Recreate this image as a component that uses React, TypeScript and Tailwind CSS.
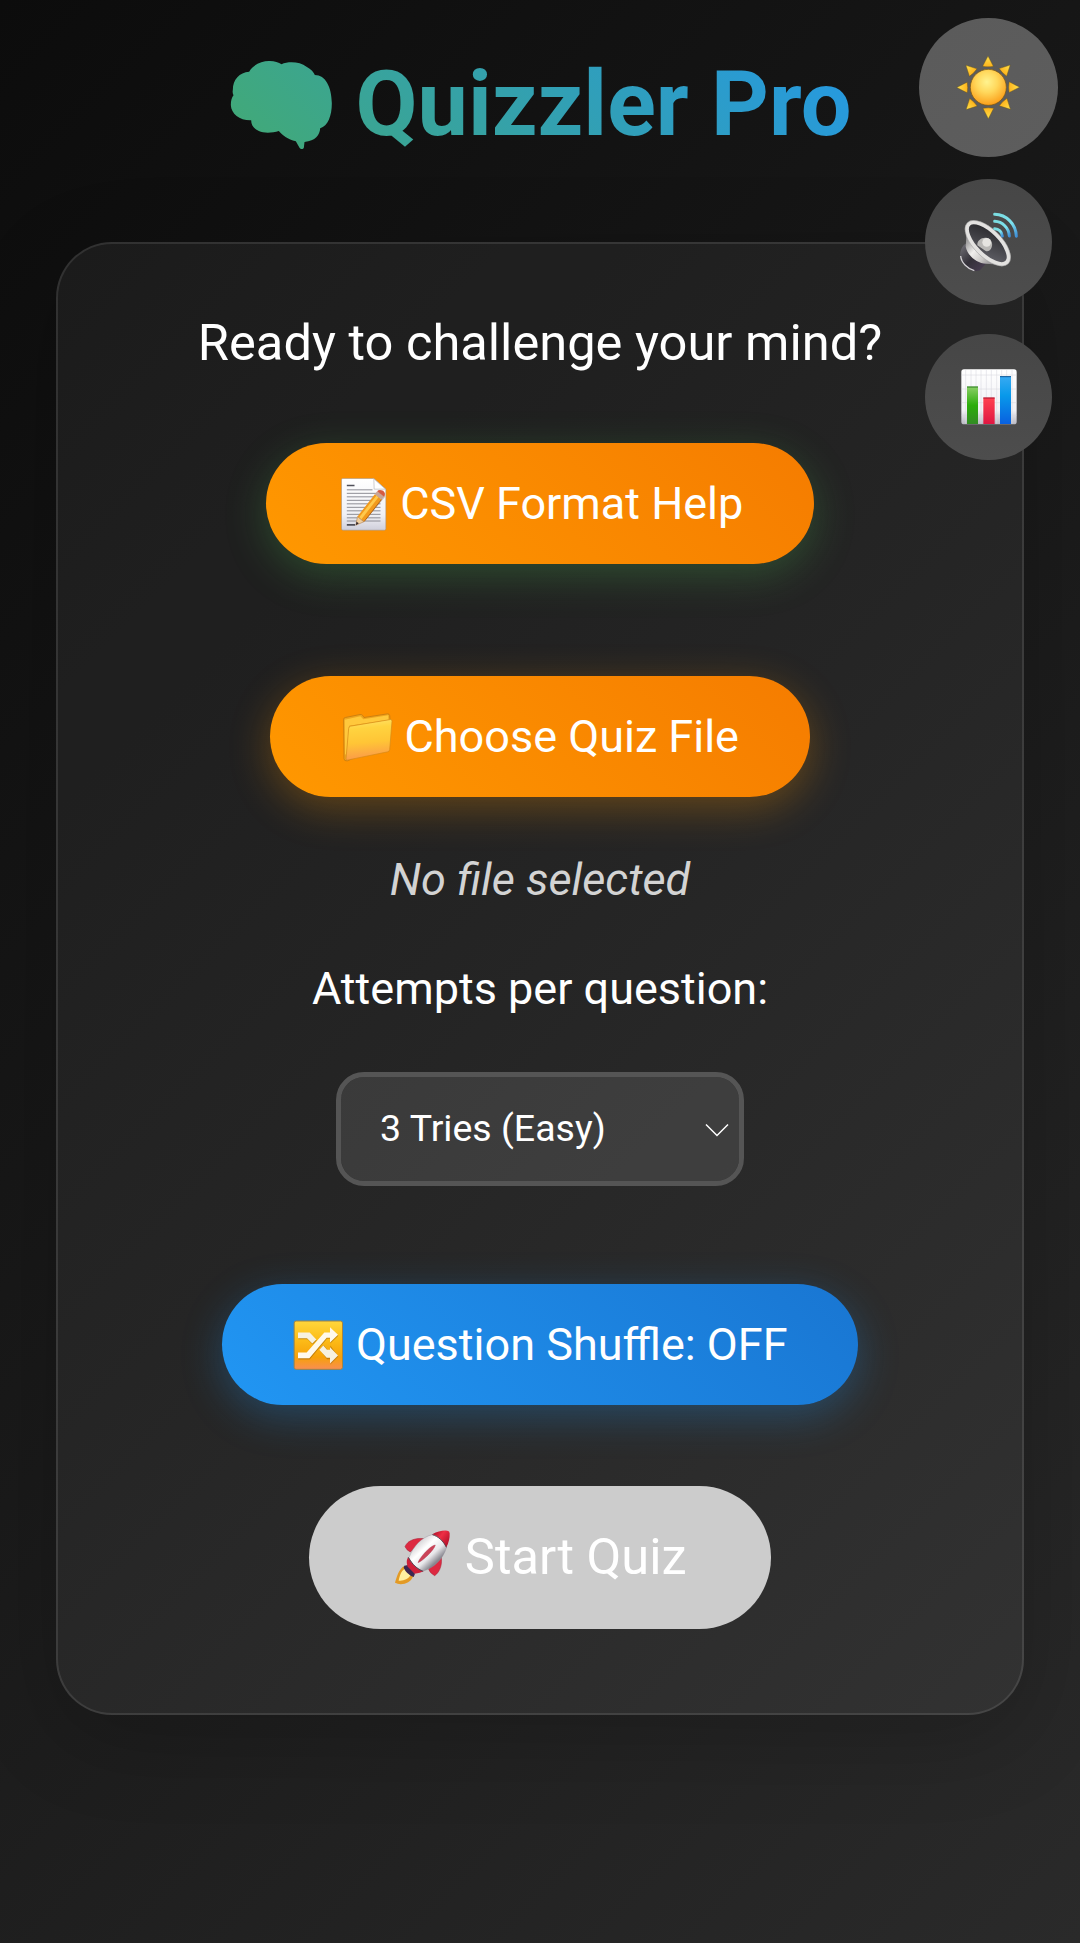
import type { ReactNode } from 'react';

function BrainIcon() {
  return (
    <svg className="mb-[2px] mr-[23px] h-[144px] w-[104px] shrink-0" viewBox="82.5 -24 312 432" overflow="visible">
      <defs>
        <linearGradient id="brain" gradientUnits="userSpaceOnUse" x1="-498" y1="474" x2="1136" y2="-1160">
          <stop offset="0" stopColor="#4caf50" />
          <stop offset="1" stopColor="#2196f3" />
        </linearGradient>
      </defs>
      <path
        fill="url(#brain)"
        d="M97 150C97 118 117 97 146 95C160 71 188 62 208 63C222 63 235 67 243 73C265 63 299 66 318 80C332 88 340 96 343 105C375 105 393 140 394 190C394 228 382 258 359 265C358 285 345 303 312 306L310 323C308 329 300 328 297 323L286 304C262 298 245 285 235 273C215 279 190 280 175 273C160 267 152 255 152 241C118 242 92 222 91 195C91 182 94 172 99 166C96 160 96 155 97 150Z"
      />
    </svg>
  );
}

const rays = [0, 45, 90, 135, 180, 225, 270, 315];

function SunIcon() {
  return (
    <svg className="h-full w-full" viewBox="57 54 417 417">
      <defs>
        <radialGradient id="sun" cx="0.46" cy="0.35" r="0.65">
          <stop offset="0" stopColor="#fff38f" />
          <stop offset="0.45" stopColor="#ffd85c" />
          <stop offset="1" stopColor="#fb9f1a" />
        </radialGradient>
        <linearGradient id="ray" x1="0" y1="0" x2="0" y2="1">
          <stop offset="0" stopColor="#ffe34e" />
          <stop offset="1" stopColor="#fdb21b" />
        </linearGradient>
      </defs>
      {rays.map((a) => (
        <path key={a} d="M264 168L280 199Q264 202 248 199Z" fill="url(#ray)" stroke="#6d5512" strokeOpacity="0.6" strokeWidth="2" transform={`rotate(${a} 264.5 262)`} />
      ))}
      <circle cx="265" cy="262" r="54" fill="url(#sun)" stroke="#7b5712" strokeOpacity="0.7" strokeWidth="3" />
    </svg>
  );
}

function SpeakerIcon() {
  return (
    <svg className="h-full w-full" viewBox="75 27 381 378">
      <defs>
        <linearGradient id="spkBase" x1="0" y1="0" x2="1" y2="1">
          <stop offset="0" stopColor="#77767c" />
          <stop offset="0.5" stopColor="#343139" />
          <stop offset="1" stopColor="#4d4057" />
        </linearGradient>
        <linearGradient id="spkNeck" gradientUnits="userSpaceOnUse" x1="200" y1="215" x2="275" y2="282">
          <stop offset="0" stopColor="#9d9c9c" />
          <stop offset="0.35" stopColor="#f0efed" />
          <stop offset="0.7" stopColor="#c9c7c5" />
          <stop offset="1" stopColor="#8d8a8e" />
        </linearGradient>
        <linearGradient id="spkCone" x1="0" y1="0" x2="1" y2="1">
          <stop offset="0" stopColor="#202023" />
          <stop offset="1" stopColor="#68686f" />
        </linearGradient>
        <linearGradient id="spkWave" x1="0" y1="0" x2="1" y2="1">
          <stop offset="0" stopColor="#7adce0" />
          <stop offset="0.6" stopColor="#7de0ec" />
          <stop offset="1" stopColor="#3f8fd6" />
        </linearGradient>
      </defs>
      <path d="M192 224C178 240 177 262 187 279C200 298 222 307 240 301L262 276L205 218Z" fill="url(#spkBase)" />
      <path d="M182 258C184 279 203 297 223 302" fill="none" stroke="#d5d3d6" strokeWidth="4" />
      <path d="M200 185L197 230C203 258 232 281 258 281L300 284Z" fill="url(#spkNeck)" />
      <g transform="rotate(45 262 221)">
        <ellipse cx="262" cy="219" rx="81" ry="36" fill="url(#spkCone)" stroke="#e3e2e0" strokeWidth="12" />
        <ellipse cx="262" cy="219" rx="87" ry="42" fill="none" stroke="#999" strokeWidth="1.500" />
      </g>
      <path d="M232 226C231 211 246 200 262 204C273 207 280 219 275 232C272 242 264 245 257 243Z" fill="#b9b8b6" />
      <circle cx="260" cy="217" r="13" fill="#e5e4e1" />
      <g fill="none" stroke="url(#spkWave)" strokeWidth="9" strokeLinecap="round">
        <path d="M284 133C320 134 348 162 349 199" />
        <path d="M284 154C307 155 327 174 328 198" />
        <path d="M284 176C296 177 306 186 307 198" />
      </g>
    </svg>
  );
}

function ChartIcon() {
  return (
    <svg className="h-full w-full" viewBox="75 491 381 378">
      <defs>
        <linearGradient id="paper" x1="0" y1="0" x2="0" y2="1">
          <stop offset="0" stopColor="#fff" />
          <stop offset="0.75" stopColor="#f1f1f5" />
          <stop offset="1" stopColor="#b9b9c3" />
        </linearGradient>
        <linearGradient id="green" x1="0" y1="0" x2="0" y2="1">
          <stop offset="0" stopColor="#8bcf66" />
          <stop offset="0.5" stopColor="#2cad0b" />
          <stop offset="1" stopColor="#328b24" />
        </linearGradient>
        <linearGradient id="red" x1="0" y1="0" x2="0" y2="1">
          <stop offset="0" stopColor="#ff4150" />
          <stop offset="1" stopColor="#df1742" />
        </linearGradient>
        <linearGradient id="blue" x1="0" y1="0" x2="0" y2="1">
          <stop offset="0" stopColor="#38aaf2" />
          <stop offset="0.4" stopColor="#0899ea" />
          <stop offset="1" stopColor="#0960e0" />
        </linearGradient>
      </defs>
      <rect x="184" y="597" width="166" height="165" rx="8" fill="url(#paper)" />
      <path d="M197 598V760M213 598V760M228 598V760M243 598V760M259 598V760M274 598V760M290 598V760M305 598V760M320 598V760M336 598V760M185 614H349M185 656H349M185 697H349M185 735H349" stroke="#d8d8de" strokeWidth="1.6" />
      <rect x="201" y="649" width="33" height="112" fill="url(#green)" />
      <path d="M201 650H234" stroke="#277a1c" strokeWidth="3" />
      <rect x="250" y="682" width="34" height="79" fill="url(#red)" />
      <path d="M250 683H284" stroke="#a5142c" strokeWidth="3" />
      <rect x="300" y="618" width="33" height="143" fill="url(#blue)" />
      <path d="M300 619H333" stroke="#0c5796" strokeWidth="3" />
    </svg>
  );
}

function MemoIcon() {
  return (
    <svg className="mr-[11.5px] h-[56px] w-[52px] shrink-0" viewBox="259.5 166.5 156 168">
      <defs>
        <linearGradient id="memo" x1="0" y1="0" x2="0" y2="1">
          <stop offset="0" stopColor="#fff" />
          <stop offset="0.7" stopColor="#f0f0f4" />
          <stop offset="1" stopColor="#cfcfdb" />
        </linearGradient>
      </defs>
      <path d="M277 174H370L406 206V325Q406 329 402 329H277Q273 329 273 325V178Q273 174 277 174Z" fill="url(#memo)" stroke="#9b8c80" strokeWidth="1.5" />
      <path d="M370 175L371 206H405Z" fill="#fff" stroke="#b3b3b8" strokeWidth="2" />
      <path d="M289 195H312M289 313H314" stroke="#50505a" strokeWidth="5" />
      <path d="M289 208H366M289 218.500H390M289 229H390M289 239.500H390M289 250H390M289 260.500H390M289 271H390M289 281.500H390M289 292H390M289 301.500H390" stroke="#85858e" strokeWidth="2.800" />
      <path d="M320 310L326 282L382 214L404 229L346 298Z" fill="#6a5a50" opacity="0.35" />
      <path d="M316 314L321 288L340 304Z" fill="#f0cfa0" stroke="#a9713a" strokeWidth="1.500" />
      <path d="M316 314L318 304L325 308Z" fill="#33262a" />
      <path d="M321 288L373 221L393 237L341 303Z" fill="#f29a1c" />
      <path d="M326 290L378 225L384 230L333 296Z" fill="#ffc94c" />
      <path d="M341 303L393 237" stroke="#b86612" strokeWidth="3" />
      <path d="M373 221L380 212L401 228L393 237Z" fill="#c9a596" />
      <path d="M380 212Q386 206 398 211Q407 219 401 229Z" fill="#d55b42" />
    </svg>
  );
}

function FolderIcon() {
  return (
    <svg className="mr-[11.5px] h-[56px] w-[52px] shrink-0" viewBox="271 145.5 156 168">
      <defs>
        <linearGradient id="front" x1="0" y1="0" x2="0.1" y2="1">
          <stop offset="0" stopColor="#ffe36d" />
          <stop offset="0.25" stopColor="#ffd33f" />
          <stop offset="0.6" stopColor="#ffc536" />
          <stop offset="1" stopColor="#fb9b48" />
        </linearGradient>
      </defs>
      <path d="M279 176Q279 172 284 171L328 162Q333 161 336 165L340 171L411 160Q416 160 417 165L418 176L413 250L290 301Q280 302 280 295Z" fill="#efa51f" stroke="#c77b10" strokeWidth="2.500" />
      <path d="M282 178L329 167L338 176L413 164V178L295 196L287 285L283 280Z" fill="#ffc83c" />
      <path d="M299 197L420 177Q424 177 424 182L417 268Q416 273 411 274L289 299Q286 299 286 295L294 204Q295 198 299 197Z" fill="url(#front)" stroke="#d58a17" strokeWidth="2" />
    </svg>
  );
}

function ShuffleIcon() {
  return (
    <svg className="mr-[11.5px] h-[56px] w-[52px] shrink-0" viewBox="247 139.5 156 168">
      <defs>
        <linearGradient id="tile" x1="0" y1="0" x2="0" y2="1">
          <stop offset="0" stopColor="#ffd63c" />
          <stop offset="0.35" stopColor="#fdbf1a" />
          <stop offset="0.75" stopColor="#f6a109" />
          <stop offset="1" stopColor="#f98e52" />
        </linearGradient>
      </defs>
      <rect x="253.500" y="151.500" width="145" height="145" rx="6" fill="url(#tile)" stroke="#a48442" strokeWidth="3" />
      <g transform="translate(1 3)" fill="#935a08" opacity="0.5">
        <path d="M265 186H300L320 207L308 219L292 203H265ZM329 233L341 221L354 237H361V222L385 255L361 279V263H351Z" />
        <path d="M265 246H291L344 186H361V170L385 193L361 216V202H351L299 264H265Z" />
      </g>
      <path d="M265 186H300L320 207L308 219L292 203H265ZM329 238L341 225L352 238H361V230L385 255L361 279V262H351Z" fill="#f7f1df" />
      <path d="M265 246H291L344 186H361V170L385 193L361 216V202H351L299 263H265Z" fill="#fff9ec" />
    </svg>
  );
}

function RocketIcon() {
  return (
    <svg className="mr-[13.500px] h-[61px] w-[58px] shrink-0 overflow-visible" viewBox="280 171 174 183">
      <defs>
        <linearGradient id="hull" gradientUnits="userSpaceOnUse" x1="350" y1="220" x2="405" y2="280">
          <stop offset="0" stopColor="#d5d3d6" />
          <stop offset="0.35" stopColor="#fff" />
          <stop offset="0.7" stopColor="#e7e7ea" />
          <stop offset="1" stopColor="#88878f" />
        </linearGradient>
        <linearGradient id="nose" gradientUnits="userSpaceOnUse" x1="405" y1="188" x2="447" y2="220">
          <stop offset="0" stopColor="#b9142c" />
          <stop offset="0.4" stopColor="#ee2f45" />
          <stop offset="1" stopColor="#b50f29" />
        </linearGradient>
      </defs>
      <path d="M315 287C297 296 291 321 286 338Q298 345 315 341C331 337 339 326 341 316Z" fill="#e39a25" />
      <path d="M316 296C303 303 299 321 297 332Q320 334 333 316Z" fill="#fff0a0" />
      <path d="M314 287L325 285L346 311L342 321Q321 313 312 293Z" fill="#3b2752" />
      <path d="M372 206C350 203 324 210 316 230Q321 241 332 246Z" fill="#dd2941" stroke="#a51b30" strokeWidth="1.500" />
      <path d="M424 259C429 279 422 306 405 317Q391 310 387 298Z" fill="#dd2941" stroke="#a51b30" strokeWidth="1.500" />
      <path d="M325 262Q318 276 324 290L345 311Q362 310 372 304Z" fill="#cf203a" />
      <path d="M398 194C366 201 341 228 328 263C337 283 353 297 371 303C404 293 430 268 441 231C431 212 416 198 398 194Z" fill="url(#hull)" stroke="#8f8c97" strokeWidth="1" />
      <path d="M326 262C338 284 353 297 370 304" fill="none" stroke="#514956" strokeWidth="3" />
      <path d="M398 193Q421 180 443 182Q450 183 450 190Q451 212 440 232C431 213 416 198 398 193Z" fill="url(#nose)" />
      <path d="M398 194C416 199 431 213 440 232" fill="none" stroke="#4a3440" strokeWidth="2.500" />
      <path d="M407 225C394 225 360 262 355 278C368 274 404 240 407 225Z" fill="#cb4358" stroke="#a52f44" strokeWidth="1" />
    </svg>
  );
}

function RoundButton({ children }: { children: ReactNode }) {
  return (
    <button className="h-[126px] w-[127px] overflow-hidden rounded-full bg-[linear-gradient(180deg,#464646,#4d4d4d)]">
      {children}
    </button>
  );
}

export default function App() {
  return (
    <div
      className="relative flex h-[1943px] w-[1080px] flex-col overflow-hidden bg-[linear-gradient(135deg,#0c0c0c_0%,#1a1a1a_50%,#2a2a2a_100%)] px-[56px] text-[45px] text-white"
      style={{ fontFamily: 'Roboto, sans-serif' }}
    >
      <h1 className="mt-[33px] flex h-[144px] items-center justify-center bg-[linear-gradient(45deg,#4caf50_-10%,#2196f3_92%)] bg-clip-text text-[90px] font-bold leading-[144px] text-transparent">
        <BrainIcon />
        Quizzler Pro
      </h1>

      <main className="mt-[65px] flex h-[1473px] flex-col items-center rounded-[56px] border-2 border-white/10 bg-white/5 shadow-[0_22px_90px_rgba(0,0,0,0.2)]">
        <p className="mt-[59px] h-[80px] text-[50.625px] leading-[80px]">Ready to challenge your mind?</p>

        <button className="mt-[60px] flex h-[121px] items-center rounded-full bg-[linear-gradient(45deg,#ff9800,#f57c00)] px-[70.300px] shadow-[0_11px_42px_rgba(76,175,80,0.3)]">
          <MemoIcon />
          CSV Format Help
        </button>

        <button className="mt-[112px] flex h-[121px] w-[540px] items-center justify-center rounded-full bg-[linear-gradient(45deg,#ff9800,#f57c00)] shadow-[0_11px_42px_rgba(255,152,0,0.3)]">
          <FolderIcon />
          Choose Quiz File
        </button>

        <p className="mt-[47px] h-[72px] italic leading-[72px] text-[#d3d3d3]">No file selected</p>
        <label className="mt-[37px] h-[72px] leading-[72px]">Attempts per question:</label>

        <button className="mt-[47px] flex h-[114px] w-[408px] items-center justify-between rounded-[28px] border-[5px] border-[#555] bg-white/10 bg-clip-padding pb-[1px] pl-[39px] pr-[10px] text-[37.500px]">
          3 Tries (Easy)
          <svg className="mt-[2px] h-[14px] w-[24px]" viewBox="0 0 24 14" fill="none" stroke="white" strokeWidth="1.500">
            <path d="M1 1.500L12 12.500L23 1.500" />
          </svg>
        </button>

        <button className="mt-[98px] flex h-[121px] items-center rounded-full bg-[linear-gradient(45deg,#2196f3,#1976d2)] px-[70.300px] shadow-[0_11px_42px_rgba(33,150,243,0.3)]">
          <ShuffleIcon />
          Question Shuffle: OFF
        </button>

        <button className="mt-[81px] flex h-[143px] items-center rounded-full bg-[#ccc] px-[84.400px] pb-[1px] text-[50.625px]">
          <RocketIcon />
          Start Quiz
        </button>
      </main>

      <div className="absolute right-[22px] top-[18px] flex w-[139px] flex-col items-center">
        <button className="h-[139px] w-[139px] rounded-full bg-white/30">
          <SunIcon />
        </button>
        <div className="mt-[22px] flex flex-col gap-[29px]">
          <RoundButton><SpeakerIcon /></RoundButton>
          <RoundButton><ChartIcon /></RoundButton>
        </div>
      </div>
    </div>
  );
}
